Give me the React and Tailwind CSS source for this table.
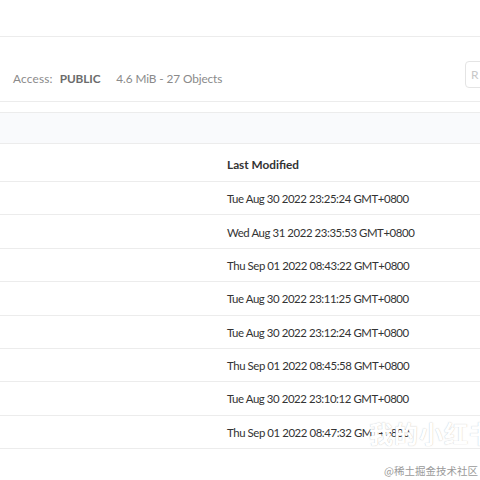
const rows = [
  'Tue Aug 30 2022 23:25:24 GMT+0800',
  'Wed Aug 31 2022 23:35:53 GMT+0800',
  'Thu Sep 01 2022 08:43:22 GMT+0800',
  'Tue Aug 30 2022 23:11:25 GMT+0800',
  'Tue Aug 30 2022 23:12:24 GMT+0800',
  'Thu Sep 01 2022 08:45:58 GMT+0800',
  'Tue Aug 30 2022 23:10:12 GMT+0800',
  'Thu Sep 01 2022 08:47:32 GMT+0800',
]

export default function App() {
  return (
    <div className="relative h-[480px] w-[480px] overflow-hidden bg-white font-['Lato','Liberation_Sans',sans-serif] text-[#333]">
      <div className="h-[37px] border-b border-[#ececec]" />

      <div className="relative flex h-[65px] items-end border-b border-[#ececec] pb-[13px] pl-[13px]">
        <div className="flex items-center text-[11.8px] tracking-[-0.1px] text-[#8a8a8a]">
          <span className="tracking-[0.2px]">Access:</span>
          <span className="ml-[7px] font-bold text-[#6b6b6b]">PUBLIC</span>
          <span className="ml-[16px]">4.6 MiB - 27 Objects</span>
        </div>
        <div className="absolute left-[465px] top-[24px] flex h-[27px] w-[36px] items-center rounded-[4px] border border-[#e4e4e4] pl-[5px] text-[12px] text-[#c8c8c8]">
          R
        </div>
      </div>

      <div className="mt-[10px] h-[32px] border-y border-[#ececec] bg-[#f9fafc]" />

      <div className="flex h-[38px] items-center border-b border-[#ececec] pl-[227px] pt-[5px] text-[11.8px] font-bold">
        Last Modified
      </div>

      {rows.map((d) => (
        <div key={d} className="flex h-[33.4px] items-center border-b border-[#ececec] pl-[227px] pt-[1px] text-[11.4px] tracking-[-0.42px]">
          {d}
        </div>
      ))}

      <div className="absolute left-[369px] top-[421px] whitespace-nowrap font-['Noto_Sans_CJK_SC',sans-serif] text-[24px] font-bold leading-none tracking-[1px] text-white [text-shadow:0_0_1px_rgba(140,140,140,0.6)]">
        我的小红书
      </div>
      <div className="absolute right-[2px] top-[463px] font-['Noto_Sans_CJK_SC',sans-serif] text-[10.5px] text-[#9a9a9a]">
        @稀土掘金技术社区
      </div>
    </div>
  )
}
